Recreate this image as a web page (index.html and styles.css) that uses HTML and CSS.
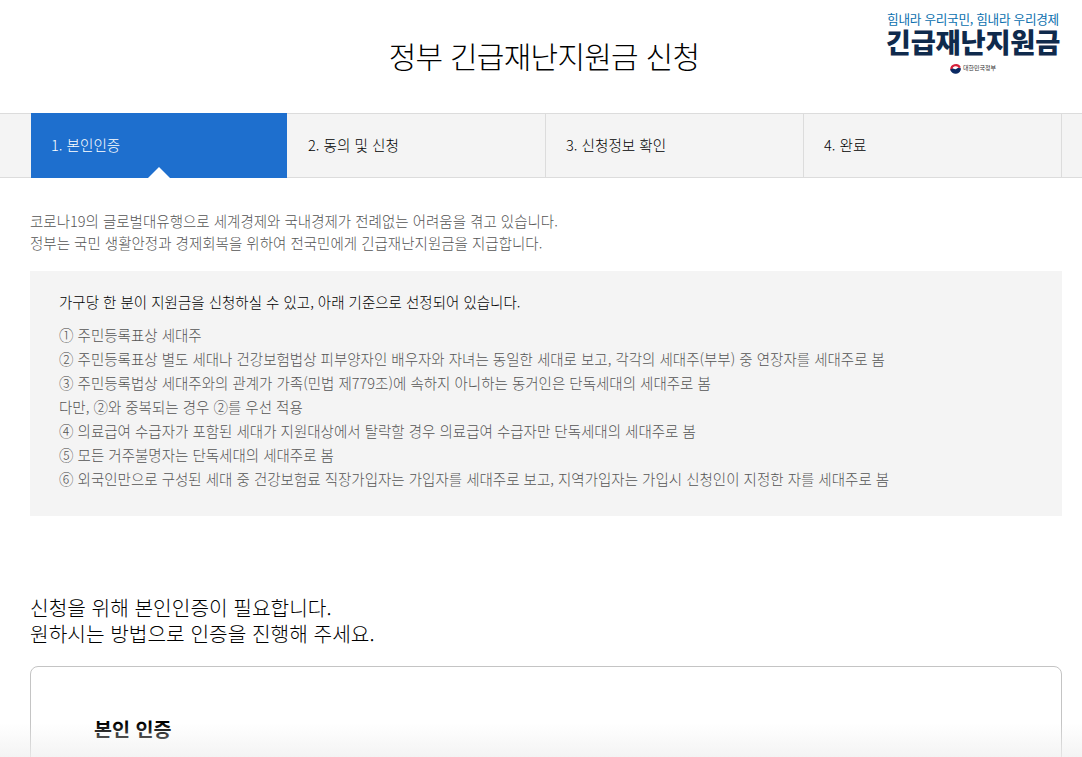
FILE: index.html
```html
<!DOCTYPE html>
<html lang="ko">
<head>
<meta charset="utf-8">
<title>정부 긴급재난지원금 신청</title>
<link rel="stylesheet" href="styles.css">
</head>
<body>
<div class="page">
  <header class="header">
    <h1 class="title">정부 긴급재난지원금 신청</h1>
    <div class="logo">
      <div class="logo-slogan">힘내라 우리국민, 힘내라 우리경제</div>
      <div class="logo-name">긴급재난지원금</div>
      <div class="logo-gov">
        <svg class="taegeuk" viewBox="0 0 20 20" width="11" height="11" aria-hidden="true">
          <path d="M2.6 13A8 8 0 0 1 17.8 8.5" fill="none" stroke="#d6203a" stroke-width="4"/>
          <path d="M18 9.5A8 8 0 0 1 2.2 11.5 C5 8 8 13 11 11 C13 9.5 15 8 18 9.5Z" fill="#0b2a63"/>
          <path d="M18 9.5A8 8 0 0 1 2.2 11.5" fill="none" stroke="#0b2a63" stroke-width="4"/>
        </svg>
        <span>대한민국정부</span>
      </div>
    </div>
  </header>

  <nav class="steps">
    <div class="step step-active">1. 본인인증</div>
    <div class="step">2. 동의 및 신청</div>
    <div class="step">3. 신청정보 확인</div>
    <div class="step">4. 완료</div>
  </nav>

  <main class="content">
    <p class="intro">코로나19의 글로벌대유행으로 세계경제와 국내경제가 전례없는 어려움을 겪고 있습니다.<br>정부는 국민 생활안정과 경제회복을 위하여 전국민에게 긴급재난지원금을 지급합니다.</p>

    <section class="notice">
      <p class="notice-lead">가구당 한 분이 지원금을 신청하실 수 있고, 아래 기준으로 선정되어 있습니다.</p>
      <ul class="notice-list">
        <li>① 주민등록표상 세대주</li>
        <li>② 주민등록표상 별도 세대나 건강보험법상 피부양자인 배우자와 자녀는 동일한 세대로 보고, 각각의 세대주(부부) 중 연장자를 세대주로 봄</li>
        <li>③ 주민등록법상 세대주와의 관계가 가족(민법 제779조)에 속하지 아니하는 동거인은 단독세대의 세대주로 봄</li>
        <li>다만, ②와 중복되는 경우 ②를 우선 적용</li>
        <li>④ 의료급여 수급자가 포함된 세대가 지원대상에서 탈락할 경우 의료급여 수급자만 단독세대의 세대주로 봄</li>
        <li>⑤ 모든 거주불명자는 단독세대의 세대주로 봄</li>
        <li>⑥ 외국인만으로 구성된 세대 중 건강보험료 직장가입자는 가입자를 세대주로 보고, 지역가입자는 가입시 신청인이 지정한 자를 세대주로 봄</li>
      </ul>
    </section>

    <h2 class="auth-heading">신청을 위해 본인인증이 필요합니다.<br>원하시는 방법으로 인증을 진행해 주세요.</h2>

    <section class="auth-card">
      <h3 class="auth-title">본인 인증</h3>
    </section>
  </main>
  <div class="fade"></div>
</div>
</body>
</html>
```

FILE: styles.css
```css
* { box-sizing: border-box; }
html, body { margin: 0; padding: 0; background: #fff; }
body {
  font-family: "Noto Sans CJK KR", "Noto Sans", sans-serif;
  overflow: hidden;
}
.page { position: relative; height: 757px; overflow: hidden; }

.header {
  position: relative;
  height: 113px;
  padding-bottom: 4px;
  padding-left: 6px;
  display: flex;
  align-items: center;
  justify-content: center;
}
.title {
  margin: 0;
  font-size: 30px;
  font-weight: 300;
  line-height: 40px;
  color: #000;
  letter-spacing: -0.75px;
}
.logo {
  position: absolute;
  top: 11px;
  right: 22px;
  width: 174px;
  display: flex;
  flex-direction: column;
  align-items: center;
}
.logo-slogan {
  font-size: 12.6px;
  line-height: 16px;
  color: #0a6fae;
  letter-spacing: -0.25px;
  white-space: nowrap;
}
.logo-name {
  font-size: 27.3px;
  line-height: 28px;
  font-weight: 900;
  color: #0f2a4c;
  letter-spacing: -0.2px;
  white-space: nowrap;
}
.logo-gov {
  display: flex;
  align-items: center;
  gap: 2px;
  margin-top: 7px;
  font-size: 6px;
  line-height: 12px;
  color: #333;
}

.steps {
  display: flex;
  height: 65px;
  padding: 0 20px 0 31px;
  background: #f4f4f4;
  border-top: 1px solid #dcdcdc;
  border-bottom: 1px solid #dcdcdc;
}
.step {
  width: 258px;
  padding-left: 20px;
  border-right: 1px solid #dcdcdc;
  font-size: 14.6px;
  font-weight: 300;
  line-height: 61px;
  color: #000;
}
.step-active {
  position: relative;
  width: 256px;
  margin: -1px 1px -1px 0;
  height: 65px;
  line-height: 63px;
  background: #1e6fce;
  color: #fff;
  border-right: 0;
}
.step-active::after {
  content: "";
  position: absolute;
  left: 117px;
  bottom: 0;
  border-left: 11px solid transparent;
  border-right: 11px solid transparent;
  border-bottom: 11px solid #fff;
}

.content { padding: 0 20px 0 30px; }
.intro {
  margin: 32px 0 0;
  font-size: 14.5px;
  line-height: 22px;
  font-weight: 300;
  color: #555;
}
.notice {
  margin-top: 17px;
  height: 245px;
  padding: 19px 29px;
  background: #f4f4f4;
}
.notice-lead {
  margin: 0 0 9px;
  font-size: 14.5px;
  line-height: 24px;
  font-weight: 300;
  color: #000;
}
.notice-list {
  margin: 0;
  padding: 0;
  list-style: none;
  font-size: 14.5px;
  line-height: 24px;
  font-weight: 300;
  color: #555;
}
.auth-heading {
  margin: 79px 0 0;
  font-size: 20.25px;
  line-height: 26px;
  font-weight: 300;
  color: #000;
}
.auth-card {
  margin-top: 19px;
  height: 200px;
  padding: 46px 63px;
  border: 1px solid #c4c4c4;
  border-radius: 8px;
}
.auth-title {
  margin: 0;
  font-size: 19.6px;
  line-height: 32px;
  font-weight: 700;
  color: #000;
}
.fade {
  position: absolute;
  left: 0;
  right: 0;
  bottom: 0;
  height: 34px;
  background: linear-gradient(to bottom, rgba(240,240,240,0), rgba(240,240,240,0.75));
}
```
